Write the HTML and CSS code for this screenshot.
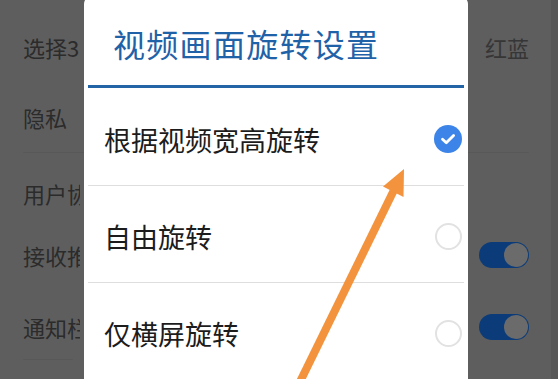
FILE: index.html
```html
<!DOCTYPE html>
<html lang="zh-CN">
<head>
    <meta charset="UTF-8">
    <meta name="viewport" content="width=device-width, initial-scale=1.0">
    <title>视频画面旋转设置</title>
    <link rel="stylesheet" href="styles.css">
</head>
<body>
    <div class="screen">
        <!-- settings page behind the dim overlay -->
        <ul class="settings">
            <li class="row row-1"><span class="label">选择3D模式</span><span class="value">红蓝</span></li>
            <li class="row row-2 line"><span class="label">隐私</span></li>
            <li class="row row-3"><span class="label">用户协议</span></li>
            <li class="row row-4"><span class="label">接收推送通知</span><span class="toggle"></span></li>
            <li class="row row-5"><span class="label">通知栏显示</span><span class="toggle"></span></li>
            <li class="short-line"></li>
        </ul>

        <div class="dialog">
            <h2 class="dialog-title">视频画面旋转设置</h2>
            <div class="title-line"></div>
            <div class="option">
                <span>根据视频宽高旋转</span>
                <span class="radio checked">
                    <svg viewBox="0 0 28 28" width="28" height="28">
                        <path d="M8.5 14.2 L12.3 17.8 L19.6 10.4" fill="none" stroke="#fff" stroke-width="2.8" stroke-linecap="round" stroke-linejoin="round"/>
                    </svg>
                </span>
            </div>
            <div class="option">
                <span>自由旋转</span>
                <span class="radio"></span>
            </div>
            <div class="option">
                <span>仅横屏旋转</span>
                <span class="radio"></span>
            </div>
        </div>

        <!-- orange annotation arrow drawn over the screenshot -->
        <svg class="arrow" viewBox="0 0 558 379" width="558" height="379">
            <line x1="295" y1="392" x2="394" y2="190" stroke="#f3933d" stroke-width="8"/>
            <polygon points="404,169 383,186.5 403.5,197" fill="#f3933d"/>
        </svg>
    </div>
</body>
</html>
```

FILE: styles.css
```css
body {
    margin: 0;
    padding: 0;
    background-color: #575757;
    font-family: "Noto Sans CJK SC", "Noto Sans", sans-serif;
}

.screen {
    position: relative;
    width: 551px;
    height: 379px;
    overflow: hidden;
    background-color: #5e5e5e;
}

.settings {
    list-style: none;
    margin: 0;
    padding: 12px 22px 0 23px;
}

.row {
    display: flex;
    align-items: center;
    justify-content: space-between;
    box-sizing: border-box;
    font-size: 22px;
    color: #2b2b2b;
}

.label {
    width: 57px;
    overflow: hidden;
    white-space: nowrap;
}

.row-1 { height: 70px; }
.row-2 { height: 71px; }
.row-3 { height: 75px; padding-top: 4px; }
.row-4 { height: 54px; }
.row-5 { height: 77px; padding-top: 12px; }

.line {
    border-bottom: 1px solid #585858;
}

.short-line {
    width: 50px;
    height: 1px;
    background-color: #585858;
}

.value {
    color: #363636;
}

.toggle {
    position: relative;
    width: 50px;
    height: 26px;
    border-radius: 13px;
    background-color: #0b3c79;
}

.toggle::after {
    content: "";
    position: absolute;
    right: 1px;
    top: 1px;
    width: 24px;
    height: 24px;
    border-radius: 50%;
    background-color: #6b6b6b;
}

.dialog {
    position: absolute;
    left: 84px;
    top: -4px;
    width: 384px;
    height: 400px;
    background-color: #ffffff;
    border-radius: 8px;
}

.dialog-title {
    margin: 0;
    height: 89px;
    padding: 4px 0 0 29px;
    box-sizing: border-box;
    display: flex;
    align-items: center;
    font-size: 32px;
    font-weight: normal;
    letter-spacing: 1.3px;
    color: #1f62a7;
}

.title-line {
    height: 3px;
    margin: 0 4px;
    background-color: #2264a6;
}

.option {
    display: flex;
    align-items: center;
    justify-content: space-between;
    height: 97px;
    margin: 0 4px;
    padding: 5px 2px 0 16px;
    box-sizing: border-box;
    border-top: 1px solid #dedede;
    font-size: 27px;
    color: #1c1c1c;
}

.title-line + .option {
    border-top: none;
}

.radio {
    width: 27px;
    height: 27px;
    border-radius: 50%;
    border: 2px solid #e2e2e2;
    box-sizing: border-box;
}

.radio.checked {
    width: 28px;
    height: 28px;
    border: none;
    background-color: #3c84e7;
}

.radio svg {
    display: block;
}

.arrow {
    position: absolute;
    left: 0;
    top: 0;
}
```
